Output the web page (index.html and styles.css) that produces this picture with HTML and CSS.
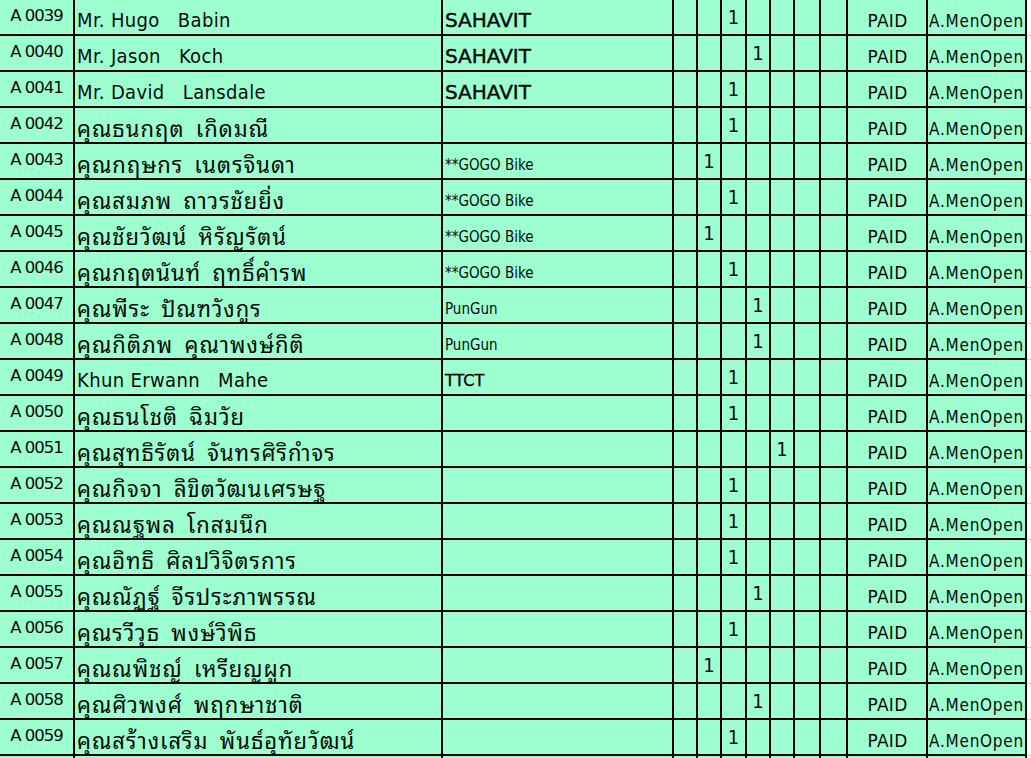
FILE: index.html
```html
<!DOCTYPE html>
<html lang="th">
<head>
<meta charset="utf-8">
<title>Registration</title>
<link rel="stylesheet" href="styles.css">
</head>
<body>
<div class="sheet">
  <div class="row"><div class="c code">A 0039</div><div class="c name">Mr. Hugo   Babin</div><div class="c team big">SAHAVIT</div><div class="c n"></div><div class="c n"></div><div class="c n">1</div><div class="c n"></div><div class="c n"></div><div class="c n"></div><div class="c n"></div><div class="c paid">PAID</div><div class="c cls">A.MenOpen</div><div class="edge"></div></div>
  <div class="row"><div class="c code">A 0040</div><div class="c name">Mr. Jason   Koch</div><div class="c team big">SAHAVIT</div><div class="c n"></div><div class="c n"></div><div class="c n"></div><div class="c n">1</div><div class="c n"></div><div class="c n"></div><div class="c n"></div><div class="c paid">PAID</div><div class="c cls">A.MenOpen</div><div class="edge"></div></div>
  <div class="row"><div class="c code">A 0041</div><div class="c name">Mr. David   Lansdale</div><div class="c team big">SAHAVIT</div><div class="c n"></div><div class="c n"></div><div class="c n">1</div><div class="c n"></div><div class="c n"></div><div class="c n"></div><div class="c n"></div><div class="c paid">PAID</div><div class="c cls">A.MenOpen</div><div class="edge"></div></div>
  <div class="row"><div class="c code">A 0042</div><div class="c name th">คุณธนกฤต เกิดมณี</div><div class="c team"></div><div class="c n"></div><div class="c n"></div><div class="c n">1</div><div class="c n"></div><div class="c n"></div><div class="c n"></div><div class="c n"></div><div class="c paid">PAID</div><div class="c cls">A.MenOpen</div><div class="edge"></div></div>
  <div class="row"><div class="c code">A 0043</div><div class="c name th">คุณกฤษกร เนตรจินดา</div><div class="c team small">**GOGO Bike</div><div class="c n"></div><div class="c n">1</div><div class="c n"></div><div class="c n"></div><div class="c n"></div><div class="c n"></div><div class="c n"></div><div class="c paid">PAID</div><div class="c cls">A.MenOpen</div><div class="edge"></div></div>
  <div class="row"><div class="c code">A 0044</div><div class="c name th">คุณสมภพ ถาวรชัยยิ่ง</div><div class="c team small">**GOGO Bike</div><div class="c n"></div><div class="c n"></div><div class="c n">1</div><div class="c n"></div><div class="c n"></div><div class="c n"></div><div class="c n"></div><div class="c paid">PAID</div><div class="c cls">A.MenOpen</div><div class="edge"></div></div>
  <div class="row"><div class="c code">A 0045</div><div class="c name th">คุณชัยวัฒน์ หิรัญรัตน์</div><div class="c team small">**GOGO Bike</div><div class="c n"></div><div class="c n">1</div><div class="c n"></div><div class="c n"></div><div class="c n"></div><div class="c n"></div><div class="c n"></div><div class="c paid">PAID</div><div class="c cls">A.MenOpen</div><div class="edge"></div></div>
  <div class="row"><div class="c code">A 0046</div><div class="c name th">คุณกฤตนันท์ ฤทธิ์คำรพ</div><div class="c team small">**GOGO Bike</div><div class="c n"></div><div class="c n"></div><div class="c n">1</div><div class="c n"></div><div class="c n"></div><div class="c n"></div><div class="c n"></div><div class="c paid">PAID</div><div class="c cls">A.MenOpen</div><div class="edge"></div></div>
  <div class="row"><div class="c code">A 0047</div><div class="c name th">คุณพีระ ปัณฑวังกูร</div><div class="c team small">PunGun</div><div class="c n"></div><div class="c n"></div><div class="c n"></div><div class="c n">1</div><div class="c n"></div><div class="c n"></div><div class="c n"></div><div class="c paid">PAID</div><div class="c cls">A.MenOpen</div><div class="edge"></div></div>
  <div class="row"><div class="c code">A 0048</div><div class="c name th">คุณกิติภพ คุณาพงษ์กิติ</div><div class="c team small">PunGun</div><div class="c n"></div><div class="c n"></div><div class="c n"></div><div class="c n">1</div><div class="c n"></div><div class="c n"></div><div class="c n"></div><div class="c paid">PAID</div><div class="c cls">A.MenOpen</div><div class="edge"></div></div>
  <div class="row"><div class="c code">A 0049</div><div class="c name">Khun Erwann   Mahe</div><div class="c team mid">TTCT</div><div class="c n"></div><div class="c n"></div><div class="c n">1</div><div class="c n"></div><div class="c n"></div><div class="c n"></div><div class="c n"></div><div class="c paid">PAID</div><div class="c cls">A.MenOpen</div><div class="edge"></div></div>
  <div class="row"><div class="c code">A 0050</div><div class="c name th">คุณธนโชติ ฉิมวัย</div><div class="c team"></div><div class="c n"></div><div class="c n"></div><div class="c n">1</div><div class="c n"></div><div class="c n"></div><div class="c n"></div><div class="c n"></div><div class="c paid">PAID</div><div class="c cls">A.MenOpen</div><div class="edge"></div></div>
  <div class="row"><div class="c code">A 0051</div><div class="c name th">คุณสุทธิรัตน์ จันทรศิริกำจร</div><div class="c team"></div><div class="c n"></div><div class="c n"></div><div class="c n"></div><div class="c n"></div><div class="c n">1</div><div class="c n"></div><div class="c n"></div><div class="c paid">PAID</div><div class="c cls">A.MenOpen</div><div class="edge"></div></div>
  <div class="row"><div class="c code">A 0052</div><div class="c name th">คุณกิจจา ลิขิตวัฒนเศรษฐ</div><div class="c team"></div><div class="c n"></div><div class="c n"></div><div class="c n">1</div><div class="c n"></div><div class="c n"></div><div class="c n"></div><div class="c n"></div><div class="c paid">PAID</div><div class="c cls">A.MenOpen</div><div class="edge"></div></div>
  <div class="row"><div class="c code">A 0053</div><div class="c name th">คุณณฐพล โกสมนึก</div><div class="c team"></div><div class="c n"></div><div class="c n"></div><div class="c n">1</div><div class="c n"></div><div class="c n"></div><div class="c n"></div><div class="c n"></div><div class="c paid">PAID</div><div class="c cls">A.MenOpen</div><div class="edge"></div></div>
  <div class="row"><div class="c code">A 0054</div><div class="c name th">คุณอิทธิ ศิลปวิจิตรการ</div><div class="c team"></div><div class="c n"></div><div class="c n"></div><div class="c n">1</div><div class="c n"></div><div class="c n"></div><div class="c n"></div><div class="c n"></div><div class="c paid">PAID</div><div class="c cls">A.MenOpen</div><div class="edge"></div></div>
  <div class="row"><div class="c code">A 0055</div><div class="c name th">คุณณัฏฐ์ จีรประภาพรรณ</div><div class="c team"></div><div class="c n"></div><div class="c n"></div><div class="c n"></div><div class="c n">1</div><div class="c n"></div><div class="c n"></div><div class="c n"></div><div class="c paid">PAID</div><div class="c cls">A.MenOpen</div><div class="edge"></div></div>
  <div class="row"><div class="c code">A 0056</div><div class="c name th">คุณรวีวุธ พงษ์วิพิธ</div><div class="c team"></div><div class="c n"></div><div class="c n"></div><div class="c n">1</div><div class="c n"></div><div class="c n"></div><div class="c n"></div><div class="c n"></div><div class="c paid">PAID</div><div class="c cls">A.MenOpen</div><div class="edge"></div></div>
  <div class="row"><div class="c code">A 0057</div><div class="c name th">คุณณพิชญ์ เหรียญผูก</div><div class="c team"></div><div class="c n"></div><div class="c n">1</div><div class="c n"></div><div class="c n"></div><div class="c n"></div><div class="c n"></div><div class="c n"></div><div class="c paid">PAID</div><div class="c cls">A.MenOpen</div><div class="edge"></div></div>
  <div class="row"><div class="c code">A 0058</div><div class="c name th">คุณศิวพงศ์ พฤกษาชาติ</div><div class="c team"></div><div class="c n"></div><div class="c n"></div><div class="c n"></div><div class="c n">1</div><div class="c n"></div><div class="c n"></div><div class="c n"></div><div class="c paid">PAID</div><div class="c cls">A.MenOpen</div><div class="edge"></div></div>
  <div class="row"><div class="c code">A 0059</div><div class="c name th">คุณสร้างเสริม พันธ์อุทัยวัฒน์</div><div class="c team"></div><div class="c n"></div><div class="c n"></div><div class="c n">1</div><div class="c n"></div><div class="c n"></div><div class="c n"></div><div class="c n"></div><div class="c paid">PAID</div><div class="c cls">A.MenOpen</div><div class="edge"></div></div>
  <div class="row"><div class="c code"></div><div class="c name"></div><div class="c team"></div><div class="c n"></div><div class="c n"></div><div class="c n"></div><div class="c n"></div><div class="c n"></div><div class="c n"></div><div class="c n"></div><div class="c paid"></div><div class="c cls"></div><div class="edge"></div></div>
</div>
</body>
</html>
```

FILE: styles.css
```css
html, body {
  margin: 0;
  padding: 0;
  background: #ffffff;
}

body {
  width: 1031px;
  height: 758px;
  overflow: hidden;
  font-family: "DejaVu Sans", "Noto Sans Thai Looped", "Noto Sans Thai", "Loma", "Garuda", "Noto Sans", sans-serif;
  font-stretch: condensed;
  color: #0a0a0a;
}

.sheet {
  display: flex;
  flex-direction: column;
}

.row {
  display: grid;
  grid-template-columns: 75px 368px 231px 24px 24px 25px 24px 24px 26px 27px 80px 99px 1fr;
  height: 36px;
  flex: none;
}

.c {
  box-sizing: border-box;
  background: #9dffcf;
  border-right: 2px solid #000;
  border-bottom: 2px solid #000;
  display: flex;
  overflow: hidden;
  white-space: pre;
  line-height: 1;
}

.edge {
  background: #ffffff;
  border-bottom: 1px solid #d0d0d0;
  box-sizing: border-box;
}

.code {
  justify-content: center;
  align-items: center;
  font-size: 16.5px;
  font-stretch: normal;
  letter-spacing: -1px;
  padding-bottom: 2px;
}

.name {
  align-items: flex-end;
  font-size: 20px;
  letter-spacing: 0.35px;
  padding: 0 0 4px 2px;
}

.name.th {
  font-size: 22px;
  letter-spacing: 1px;
  word-spacing: 4px;
  padding-bottom: 1px;
  overflow: visible;
}

.team {
  align-items: flex-end;
  padding: 0 0 4px 2px;
}

.team.big {
  font-size: 20px;
  font-stretch: normal;
  -webkit-text-stroke: 0.45px #0a0a0a;
}

.team.mid {
  font-size: 16px;
  font-stretch: normal;
  -webkit-text-stroke: 0.4px #0a0a0a;
  padding-bottom: 5px;
}

.team.small {
  font-size: 15px;
  padding-bottom: 5px;
}

.n {
  justify-content: center;
  align-items: center;
  font-size: 20px;
  padding-bottom: 1px;
}

.paid {
  justify-content: center;
  align-items: flex-end;
  font-size: 17px;
  font-stretch: normal;
  letter-spacing: 0.3px;
  padding: 0 0 4px 1px;
}

.cls {
  align-items: flex-end;
  font-size: 17px;
  letter-spacing: 0.75px;
  padding: 0 0 4px 1px;
}
```
